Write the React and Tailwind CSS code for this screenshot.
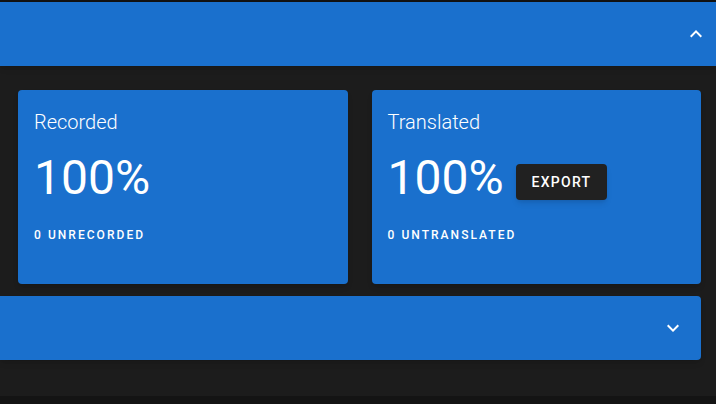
import { Fragment } from "react";

const ExpandLess = ({ className }) => (
  <svg viewBox="0 0 24 24" className={className} fill="currentColor">
    <path d="M12 8l-6 6 1.41 1.41L12 10.83l4.59 4.58L18 14z" />
  </svg>
);

const ExpandMore = ({ className }) => (
  <svg viewBox="0 0 24 24" className={className} fill="currentColor">
    <path d="M16.59 8.59L12 13.17 7.41 8.59 6 10l6 6 6-6z" />
  </svg>
);

const STATS = [
  { title: "Recorded", value: "100%", caption: "0 unrecorded" },
  { title: "Translated", value: "100%", caption: "0 untranslated", action: "Export" },
];

const StatCard = ({ stat }) => (
  <div className="flex flex-col rounded bg-[#1a70cd] p-4 text-white shadow-md h-[194px]">
    <h6 className="text-[20px] leading-[32px] font-light">{stat.title}</h6>
    <div className="mt-3 flex items-start">
      <span className="text-[48px] leading-[56px] font-normal">{stat.value}</span>
      {stat.action && (
        <button className="ml-3 mt-[14px] h-9 rounded bg-[#212121] px-4 text-[14px] font-medium uppercase tracking-[0.09em] text-white shadow-md">
          {stat.action}
        </button>
      )}
    </div>
    <p className="mt-[13px] text-[12px] leading-[32px] font-medium uppercase tracking-[0.17em]">
      {stat.caption}
    </p>
  </div>
);

export default function App() {
  return (
    <div
      className="flex h-[404px] w-[716px] flex-col overflow-hidden bg-[#1c1c1c]"
      style={{ fontFamily: "Roboto, 'Liberation Sans', sans-serif" }}
    >
      <div className="h-[2px] bg-[#121212]" />
      <div className="flex h-16 items-center justify-end bg-[#1a70cd] pr-2 text-white shadow-md">
        <ExpandLess className="h-6 w-6" />
      </div>

      <div className="flex flex-col pr-[15px]">
        <div className="mt-6 grid grid-cols-2 gap-6 pl-[18px]">
          {STATS.map((stat) => (
            <Fragment key={stat.title}>
              <StatCard stat={stat} />
            </Fragment>
          ))}
        </div>

        <div className="mt-3 flex h-16 items-center justify-end rounded-r bg-[#1a70cd] pr-4 text-white shadow-md">
          <ExpandMore className="h-6 w-6" />
        </div>
      </div>

      <div className="flex-1" />
      <div className="h-2 bg-[#141414]" />
    </div>
  );
}
